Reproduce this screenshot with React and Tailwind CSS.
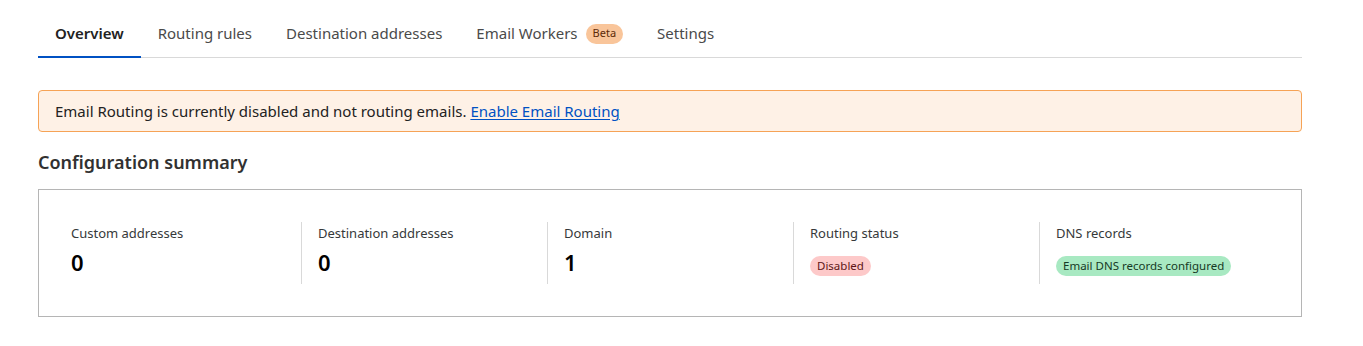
import { useState } from 'react';

const tabs = [
  { id: 'overview', label: 'Overview' },
  { id: 'routing', label: 'Routing rules' },
  { id: 'destinations', label: 'Destination addresses' },
  { id: 'workers', label: 'Email Workers', beta: true },
  { id: 'settings', label: 'Settings' },
];

function Stat({ label, children, first }) {
  return (
    <div className={`flex flex-col pl-4 h-[62px] ${first ? '' : 'border-l border-[#d9d9d9]'}`}>
      <span className="text-[13px] leading-[18px] pt-[2px] text-[#36393a]">{label}</span>
      <div className="mt-[6px]">{children}</div>
    </div>
  );
}

function Badge({ className, children }) {
  return (
    <span className={`inline-flex items-center h-[20px] px-[7px] rounded-full text-[11.5px] leading-none ${className}`}>
      {children}
    </span>
  );
}

export default function App() {
  const [active, setActive] = useState('overview');

  return (
    <div className="w-[1363px] h-[346px] bg-white pl-[38px] pt-[10px] font-['Noto_Sans',sans-serif] text-[#313131]">
      <div className="w-[1264px]">
        {/* Tabs */}
        <nav className="flex border-b border-[#d9d9d9]">
          {tabs.map((tab) => {
            const isActive = active === tab.id;
            return (
              <button
                key={tab.id}
                onClick={() => setActive(tab.id)}
                className={`relative flex items-center gap-2 h-[47px] px-[17px] text-[15px] ${
                  isActive ? 'font-semibold text-[#222] px-[16px] pl-[17px]' : 'text-[#4a4a4a]'
                }`}
              >
                {tab.label}
                {tab.beta && (
                  <span className="inline-flex items-center h-[20px] px-[7px] rounded-full bg-[#f9c59a] text-[#5c2a08] text-[11px]">
                    Beta
                  </span>
                )}
                {isActive && <span className="absolute left-0 right-0 bottom-[-1px] h-[2px] bg-[#0051c3]"></span>}
              </button>
            );
          })}
        </nav>

        {/* Alert */}
        <div className="mt-[32px] h-[42px] flex items-center px-4 rounded-[4px] border border-[#f6a356] bg-[#fef1e6] text-[15px] text-[#222]">
          Email Routing is currently disabled and not routing emails.&nbsp;
          <a href="#" className="text-[#0051c3] underline underline-offset-2">Enable Email Routing</a>
        </div>

        <h2 className="mt-[17px] text-[18px] font-semibold text-[#313131] leading-[26px]">Configuration summary</h2>

        {/* Summary card */}
        <div className="mt-[14px] border border-[#b5b5b5] px-4 py-8 grid grid-cols-5">
          <Stat label="Custom addresses" first>
            <span className="text-[22px] font-semibold leading-[28px] text-black">0</span>
          </Stat>
          <Stat label="Destination addresses">
            <span className="text-[22px] font-semibold leading-[28px] text-black">0</span>
          </Stat>
          <Stat label="Domain">
            <span className="text-[22px] font-semibold leading-[28px] text-black">1</span>
          </Stat>
          <Stat label="Routing status">
            <Badge className="mt-[8px] bg-[#fdc9c9] text-[#5e1616]">Disabled</Badge>
          </Stat>
          <Stat label="DNS records">
            <Badge className="mt-[8px] bg-[#a8e9c2] text-[#163a25]">Email DNS records configured</Badge>
          </Stat>
        </div>
      </div>
    </div>
  );
}
